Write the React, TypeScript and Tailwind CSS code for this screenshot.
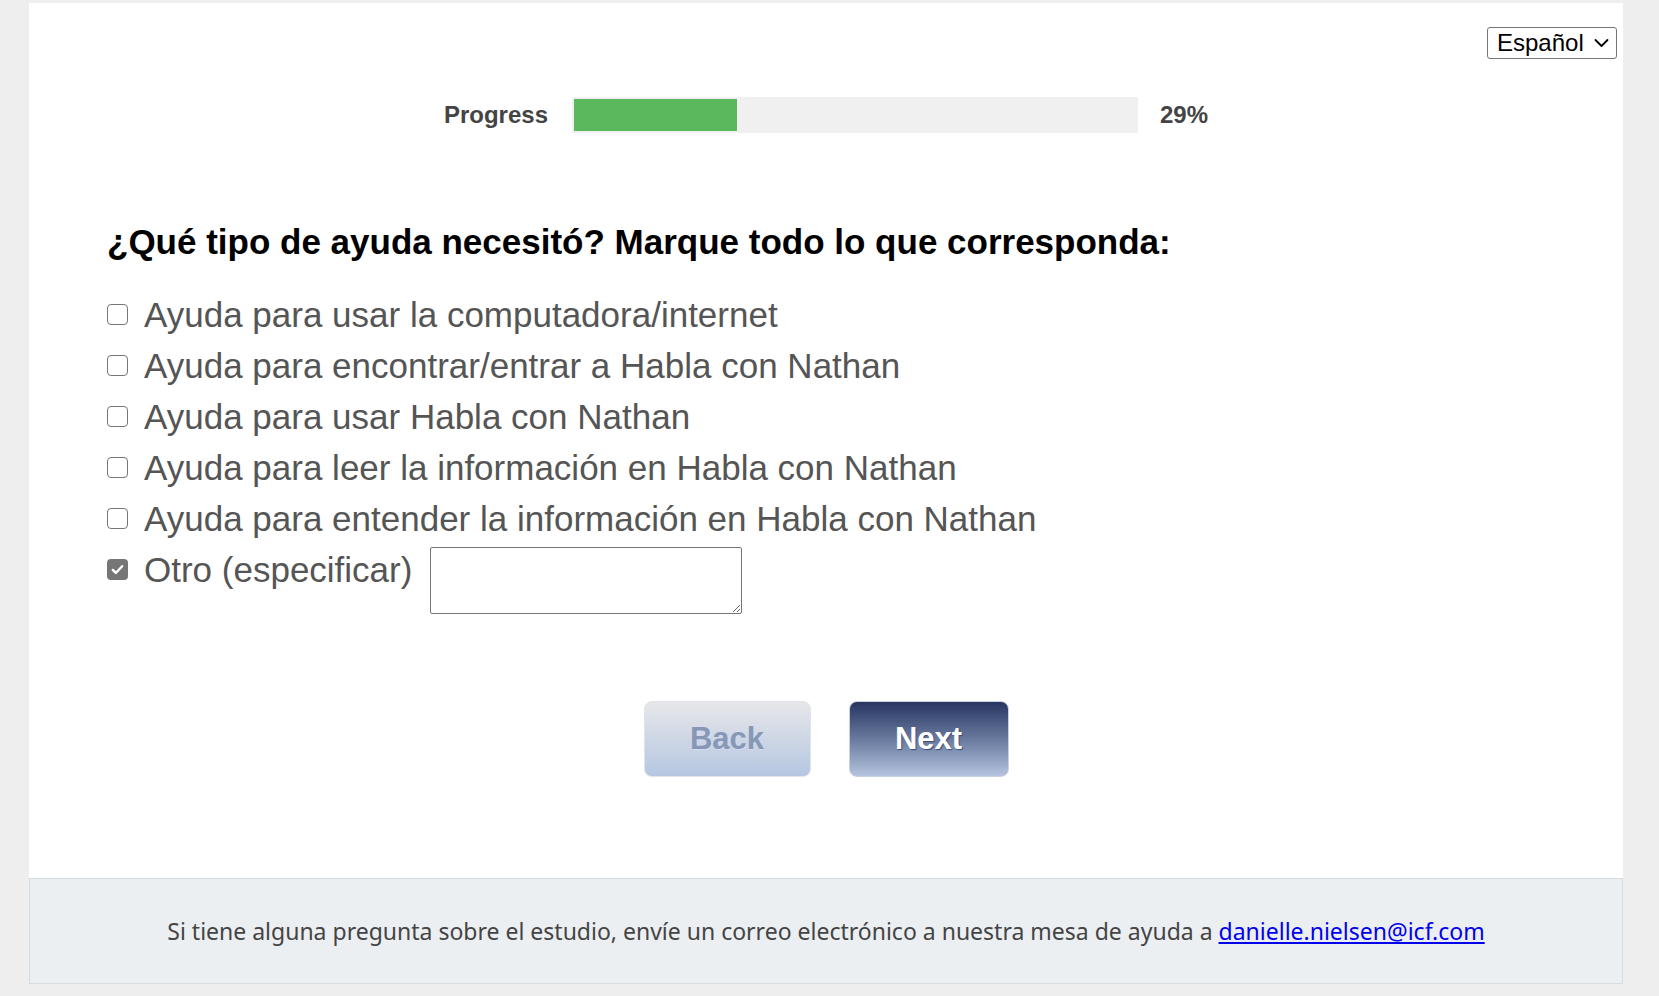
const options = [
  "Ayuda para usar la computadora/internet",
  "Ayuda para encontrar/entrar a Habla con Nathan",
  "Ayuda para usar Habla con Nathan",
  "Ayuda para leer la información en Habla con Nathan",
  "Ayuda para entender la información en Habla con Nathan",
];

function Box(props: { checked?: boolean }) {
  if (props.checked) {
    return (
      <span className="flex h-[21px] w-[21px] shrink-0 items-center justify-center rounded-[4px] bg-[#767676]">
        <svg width="15" height="15" viewBox="0 0 16 16" fill="none">
          <path d="M3 8.5l3.2 3.2L13 4.5" stroke="white" strokeWidth="2.6" strokeLinecap="round" strokeLinejoin="round" />
        </svg>
      </span>
    );
  }
  return <span className="h-[21px] w-[21px] shrink-0 rounded-[4px] border-[1.5px] border-[#767676] bg-white" />;
}

function LangSelect() {
  return (
    <div className="flex h-[32px] w-[130px] items-center justify-between rounded-[3px] border border-[#767676] bg-white pl-[9px] pr-[7px] text-[24px] leading-none text-black">
      <span>Español</span>
      <svg width="15" height="10" viewBox="0 0 15 10" fill="none">
        <path d="M1.5 2l6 6 6-6" stroke="black" strokeWidth="1.8" strokeLinecap="round" strokeLinejoin="round" />
      </svg>
    </div>
  );
}

function ProgressBar(props: { value: number }) {
  return (
    <div className="flex items-center justify-center text-[24px] font-bold text-[#444]">
      <span>Progress</span>
      <div className="ml-[24px] h-[36px] w-[566px] bg-[#f0f0f0] p-[2px]">
        <div className="h-full bg-[#5cb85c]" style={{ width: props.value + "%" }} />
      </div>
      <span className="ml-[22px]">{props.value}%</span>
    </div>
  );
}

export default function App() {
  return (
    <div className="min-h-screen bg-[#eeeeee] pt-[3px] pb-[12px] font-['Liberation_Sans',Arial,sans-serif]">
      <div className="ml-[29px] w-[1594px]">
        <main className="bg-white pb-[101px]">
          <div className="flex justify-end pt-[24px] pr-[6px]">
            <LangSelect />
          </div>

          <div className="mt-[38px]">
            <ProgressBar value={29} />
          </div>

          <div className="mt-[89px] pl-[78px]">
            <h1 className="text-[35px] font-bold leading-[40px] text-black">
              ¿Qué tipo de ayuda necesitó? Marque todo lo que corresponda:
            </h1>

            <div className="mt-[27px] flex flex-col text-[35px] text-[#555]">
              {options.map((o) => (
                <label key={o} className="flex h-[51px] items-center gap-[16px]">
                  <Box />
                  <span className="leading-[51px]">{o}</span>
                </label>
              ))}
              <div className="flex items-start">
                <label className="flex h-[51px] items-center gap-[16px]">
                  <Box checked />
                  <span className="leading-[51px]">Otro (especificar)</span>
                </label>
                <textarea className="ml-[18px] mt-[3px] h-[67px] w-[312px] rounded-[2px] border border-[#767676] bg-white" />
              </div>
            </div>
          </div>

          <div className="mt-[87px] flex justify-center gap-[38px]">
            <button className="h-[76px] w-[167px] rounded-[8px] border border-[#dfe3ea] bg-gradient-to-b from-[#e7e7e9] to-[#b5c6e1] text-[31px] font-bold text-[#8798b6] [text-shadow:1px_1px_1px_#d4dced]">
              Back
            </button>
            <button className="h-[76px] w-[160px] rounded-[8px] border border-[#c7d1e2] bg-gradient-to-b from-[#283661] to-[#b4c4df] text-[31px] font-bold text-white [text-shadow:1px_1px_1px_#3b4b7a]">
              Next
            </button>
          </div>
        </main>

        <footer className="flex h-[106px] items-center justify-center border border-[#d6dce3] bg-[#eceff2] font-['Noto_Sans',sans-serif] text-[23px] text-[#444]">
          <p>
            Si tiene alguna pregunta sobre el estudio, envíe un correo electrónico a nuestra mesa de ayuda a{" "}
            <a href="mailto:danielle.nielsen@icf.com" className="text-[#0000ee] underline">
              danielle.nielsen@icf.com
            </a>
          </p>
        </footer>
      </div>
    </div>
  );
}
